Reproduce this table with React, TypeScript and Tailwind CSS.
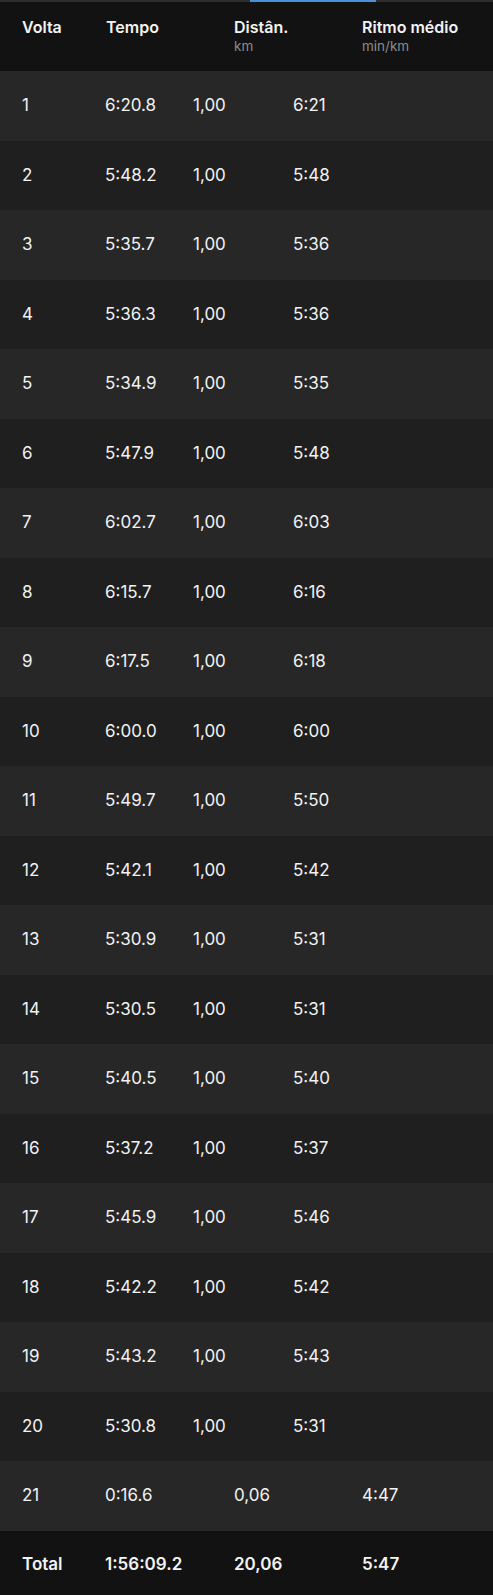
const laps = [
  ["1", "6:20.8", "1,00", "6:21"],
  ["2", "5:48.2", "1,00", "5:48"],
  ["3", "5:35.7", "1,00", "5:36"],
  ["4", "5:36.3", "1,00", "5:36"],
  ["5", "5:34.9", "1,00", "5:35"],
  ["6", "5:47.9", "1,00", "5:48"],
  ["7", "6:02.7", "1,00", "6:03"],
  ["8", "6:15.7", "1,00", "6:16"],
  ["9", "6:17.5", "1,00", "6:18"],
  ["10", "6:00.0", "1,00", "6:00"],
  ["11", "5:49.7", "1,00", "5:50"],
  ["12", "5:42.1", "1,00", "5:42"],
  ["13", "5:30.9", "1,00", "5:31"],
  ["14", "5:30.5", "1,00", "5:31"],
  ["15", "5:40.5", "1,00", "5:40"],
  ["16", "5:37.2", "1,00", "5:37"],
  ["17", "5:45.9", "1,00", "5:46"],
  ["18", "5:42.2", "1,00", "5:42"],
  ["19", "5:43.2", "1,00", "5:43"],
  ["20", "5:30.8", "1,00", "5:31"],
];

export default function App() {
  return (
    <div
      className="w-[493px] bg-[#121212] text-[#f2f2f2]"
      style={{ fontFamily: "Inter, 'Noto Sans', sans-serif" }}
    >
      {/* tab indicator strip */}
      <div className="h-[2px] bg-[#2e2e2e] flex">
        <div className="w-[250px]" />
        <div className="w-[126px] bg-[#4a8fd8]" />
      </div>

      {/* header */}
      <div className="h-[69px] flex pt-[15px] text-[16px] font-semibold leading-[20px]">
        <div className="w-[106px] pl-[22px]">Volta</div>
        <div className="w-[128px]">Tempo</div>
        <div className="w-[128px]">
          <div>Distân.</div>
          <div className="text-[13.5px] font-normal text-[#8c8c8c] leading-[18px]">km</div>
        </div>
        <div>
          <div>Ritmo médio</div>
          <div className="text-[13.5px] font-normal text-[#8c8c8c] leading-[18px]">min/km</div>
        </div>
      </div>

      {/* laps */}
      {laps.map(([n, t, d, p], i) => (
        <div
          key={n}
          className={
            i % 2 === 0
              ? "h-[69.5px] flex items-center text-[17px] bg-[#272727]"
              : "h-[69.5px] flex items-center text-[17px] bg-[#1f1f1f]"
          }
        >
          <div className="w-[105px] pl-[22px]">{n}</div>
          <div className="w-[88px]">{t}</div>
          <div className="w-[100px]">{d}</div>
          <div>{p}</div>
        </div>
      ))}

      {/* last partial lap */}
      <div className="h-[69.5px] flex items-center text-[17px] bg-[#272727]">
        <div className="w-[105px] pl-[22px]">21</div>
        <div className="w-[129px]">0:16.6</div>
        <div className="w-[128px]">0,06</div>
        <div>4:47</div>
      </div>

      {/* total */}
      <div className="h-[65px] flex items-center pt-[4px] text-[17px] font-semibold bg-[#121212]">
        <div className="w-[105px] pl-[22px]">Total</div>
        <div className="w-[129px]">1:56:09.2</div>
        <div className="w-[128px]">20,06</div>
        <div>5:47</div>
      </div>
    </div>
  );
}
